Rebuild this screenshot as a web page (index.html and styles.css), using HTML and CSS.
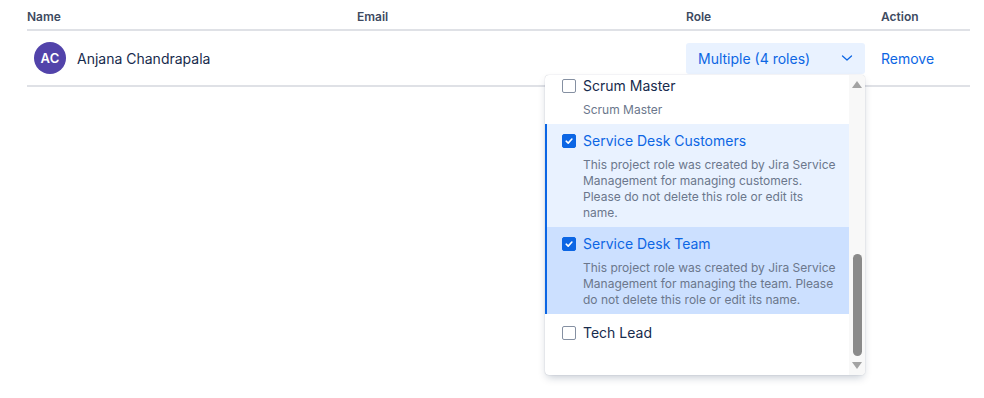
FILE: index.html
```html
<!DOCTYPE html>
<html>
<head>
<meta charset="utf-8">
<link rel="stylesheet" href="styles.css">
</head>
<body>
<div class="table">
  <div class="row head">
    <div class="c name">Name</div>
    <div class="c email">Email</div>
    <div class="c role">Role</div>
    <div class="c action">Action</div>
  </div>
  <div class="row body">
    <div class="c name user">
      <span class="avatar">AC</span>
      <span class="uname">Anjana Chandrapala</span>
    </div>
    <div class="c email"></div>
    <div class="c role">
      <div class="picker">
        <button class="trigger">
          <span>Multiple (4 roles)</span>
          <svg class="chev" width="14" height="14" viewBox="0 0 14 14"><path d="M2.5 5 L7 9 L11.5 5" fill="none" stroke="#0c66e4" stroke-width="1.3" stroke-linecap="round" stroke-linejoin="round"/></svg>
        </button>
        <div class="menu">
          <div class="list">
            <div class="opt first">
              <div class="title"><span class="cb"></span>Scrum Master</div>
              <div class="desc">Scrum Master</div>
            </div>
            <div class="opt sel">
              <div class="title"><span class="cb on"><svg width="10" height="10" viewBox="0 0 10 10"><path d="M2.2 5.2 L4.2 7.1 L7.9 3" fill="none" stroke="#fff" stroke-width="1.6" stroke-linecap="round" stroke-linejoin="round"/></svg></span>Service Desk Customers</div>
              <div class="desc">This project role was created by Jira Service Management for managing customers. Please do not delete this role or edit its name.</div>
            </div>
            <div class="opt sel hover">
              <div class="title"><span class="cb on"><svg width="10" height="10" viewBox="0 0 10 10"><path d="M2.2 5.2 L4.2 7.1 L7.9 3" fill="none" stroke="#fff" stroke-width="1.6" stroke-linecap="round" stroke-linejoin="round"/></svg></span>Service Desk Team</div>
              <div class="desc">This project role was created by Jira Service Management for managing the team. Please do not delete this role or edit its name.</div>
            </div>
            <div class="opt last">
              <div class="title"><span class="cb"></span>Tech Lead</div>
            </div>
          </div>
          <div class="sbar">
            <span class="arr up"></span>
            <div class="track"><div class="thumb"></div></div>
            <span class="arr down"></span>
          </div>
        </div>
      </div>
    </div>
    <div class="c action"><a class="remove">Remove</a></div>
  </div>
</div>
</body>
</html>
```

FILE: styles.css
```css
* { box-sizing: border-box; }
html, body { margin: 0; background: #fff; }
body {
  font-family: Inter, "Noto Sans", sans-serif;
  color: #172b4d;
  padding: 0 14px 0 27px;
  min-height: 398px;
}
.table { width: 943px; }
.row { display: flex; }
.c { flex: none; }
.name { width: 330px; }
.email { width: 329px; }
.role { width: 195px; }
.action { width: 89px; }
.head {
  height: 31px;
  padding-top: 9px;
  border-bottom: 2px solid #dfe1e6;
  font-size: 12px;
  font-weight: 600;
  color: #3d4a61;
  line-height: 16px;
}
.body {
  height: 56px;
  align-items: center;
  border-bottom: 2px solid #dfe1e6;
}
.user { display: flex; align-items: center; padding-left: 7px; gap: 11px; }
.avatar {
  width: 32px; height: 32px; border-radius: 50%;
  background: #5243aa; color: #fff;
  font-size: 13px; font-weight: 600;
  display: flex; align-items: center; justify-content: center;
  letter-spacing: 0.2px;
}
.uname { font-size: 14px; color: #172b4d; }
.picker { position: relative; width: 179px; }
.trigger {
  width: 179px; height: 31px;
  border: 0; border-radius: 3px;
  background: #e9f2ff;
  color: #0c66e4;
  font-family: inherit; font-size: 14px;
  display: flex; align-items: center; justify-content: space-between;
  padding: 0 11px 0 12px;
}
.remove { color: #0c66e4; font-size: 14px; }
.menu {
  position: absolute;
  right: 0; top: 32px;
  width: 320px; height: 300px;
  background: #fff;
  border-radius: 4px;
  box-shadow: 0 4px 8px -2px rgba(9,30,66,.25), 0 0 1px rgba(9,30,66,.31);
  display: flex;
  overflow: hidden;
  z-index: 5;
}
.list { width: 304px; flex: none; }
.opt {
  padding: 7px 12px 6px 15px;
  border-left: 2px solid transparent;
}
.opt.first { padding-top: 1px; padding-bottom: 6px; }
.opt.last { padding-top: 9px; }
.opt.sel { background: #e9f2ff; border-left-color: #0c66e4; }
.opt.hover { background: #cce0ff; }
.title {
  display: flex; align-items: center; gap: 7px;
  font-size: 14px; line-height: 20px; color: #172b4d;
}
.sel .title { color: #0c66e4; }
.desc {
  font-size: 12px; line-height: 16px; color: #6b778c;
  padding-left: 21px; margin-top: 6px;
}
.cb {
  width: 14px; height: 14px; flex: none;
  border: 1.5px solid #8590a2; border-radius: 2px;
  background: #fff;
  display: flex; align-items: center; justify-content: center;
}
.cb.on { background: #0c66e4; border-color: #0c66e4; }
.sbar {
  width: 16px; flex: none;
  background: #f8f8f8;
  display: flex; flex-direction: column; align-items: center;
  padding: 6px 0 6px;
}
.arr { width: 0; height: 0; border-left: 5px solid transparent; border-right: 5px solid transparent; }
.arr.up { border-bottom: 7px solid #a3a3a3; }
.arr.down { border-top: 7px solid #a3a3a3; }
.track { flex: 1; width: 100%; display: flex; justify-content: center; }
.thumb { width: 9px; height: 102px; margin-top: 166px; background: #8a8a8a; border-radius: 5px; }
```
